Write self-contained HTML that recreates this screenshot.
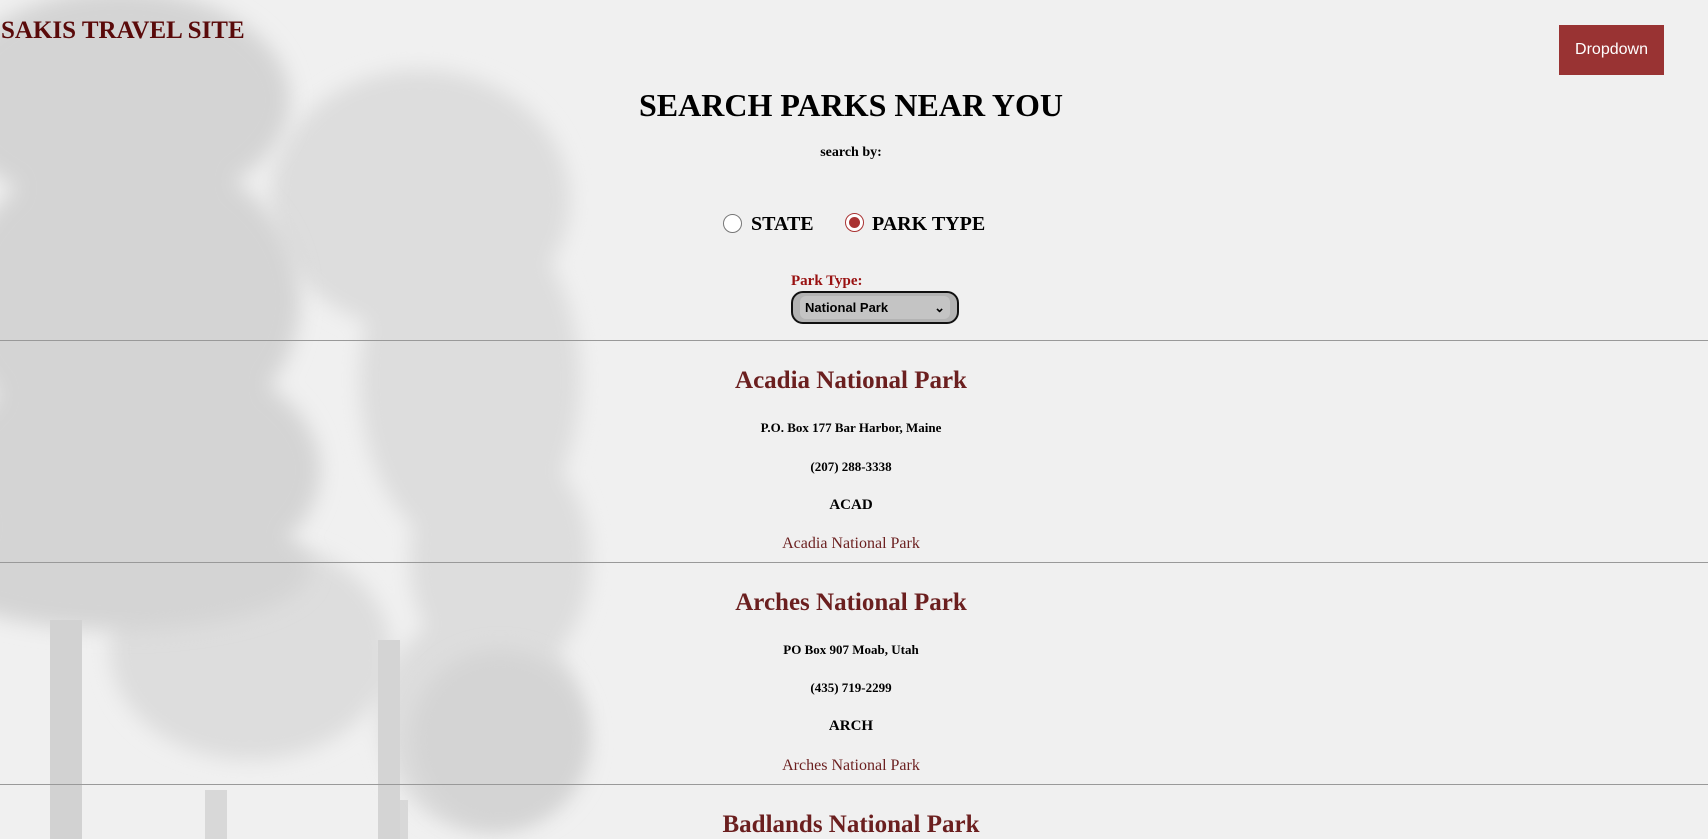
<!DOCTYPE html>
<html><head><style>
html,body{margin:0;padding:0;width:1708px;height:839px;overflow:hidden;background:#f0f0f0;font-family:"Liberation Serif",serif;}
.bg{position:absolute;left:0;top:0;width:1708px;height:839px;}
.t{position:absolute;left:-3px;width:1708px;text-align:center;white-space:nowrap;}
hr{position:absolute;left:0;width:1708px;margin:0;border:0;border-top:1px solid #999;}
.name{font-size:25px;font-weight:bold;color:#6b1f1f;}
.addr{font-size:13px;font-weight:bold;}
.code{font-size:15px;font-weight:bold;}
.link{font-size:16px;color:#6b1f1f;}
</style></head><body>
<svg class="bg" width="1708" height="839">
<defs><filter id="f" x="-20%" y="-20%" width="140%" height="140%"><feGaussianBlur stdDeviation="10"/></filter></defs>
<g fill="#dddddd" filter="url(#f)">
<ellipse cx="420" cy="200" rx="150" ry="130"/>
<ellipse cx="470" cy="380" rx="110" ry="170"/>
<ellipse cx="500" cy="560" rx="90" ry="120"/>
<ellipse cx="250" cy="650" rx="140" ry="110"/>
<ellipse cx="480" cy="720" rx="100" ry="110"/>
</g>
<rect x="380" y="800" width="28" height="39" fill="#d8d8d8"/>
<rect x="205" y="790" width="22" height="49" fill="#d8d8d8"/>
<g fill="#d4d4d4" filter="url(#f)">
<ellipse cx="120" cy="100" rx="170" ry="110"/>
<ellipse cx="130" cy="300" rx="170" ry="150"/>
<ellipse cx="140" cy="470" rx="180" ry="120"/>
<ellipse cx="120" cy="570" rx="190" ry="60"/>
<ellipse cx="500" cy="740" rx="90" ry="90"/>
</g>
<rect x="50" y="620" width="32" height="219" fill="#d2d2d2"/>
<rect x="378" y="640" width="22" height="199" fill="#d4d4d4"/>
</svg>

<div style="position:absolute;left:1px;top:17px;font-size:25px;font-weight:bold;color:#5a0a0a;">SAKIS TRAVEL SITE</div>
<div style="position:absolute;left:1559px;top:25px;width:105px;height:50px;background:#993333;color:#fff;font-family:'Liberation Sans',sans-serif;font-size:16px;line-height:50px;text-align:center;">Dropdown</div>

<div class="t" style="top:87px;font-size:32px;font-weight:bold;">SEARCH PARKS NEAR YOU</div>
<div class="t" style="top:145px;font-size:14px;font-weight:bold;">search by:</div>

<div style="position:absolute;left:723px;top:214px;width:19px;height:19px;border-radius:50%;border:1px solid #777;background:#fff;box-sizing:border-box;"></div>
<div style="position:absolute;left:751px;top:213px;font-size:20px;font-weight:bold;">STATE</div>
<div style="position:absolute;left:845px;top:213px;width:19px;height:19px;border-radius:50%;border:1px solid #a33;background:#fff;box-sizing:border-box;"><div style="position:absolute;left:3px;top:3px;width:11px;height:11px;border-radius:50%;background:#a33;"></div></div>
<div style="position:absolute;left:872px;top:213px;font-size:20px;font-weight:bold;">PARK TYPE</div>

<div style="position:absolute;left:791px;top:273px;font-size:15px;font-weight:bold;color:#991111;">Park Type:</div>
<div style="position:absolute;left:791px;top:291px;width:168px;height:33px;box-sizing:border-box;border:2px solid #111;border-radius:12px;background:#b3b3b3;">
<div style="position:absolute;left:7px;top:3px;width:150px;height:23px;background:#c4c4c4;border-radius:6px;font-family:'Liberation Sans',sans-serif;font-size:13px;font-weight:bold;line-height:23px;padding-left:5px;box-sizing:border-box;">National Park<span style="position:absolute;right:5px;">&#x2304;</span></div>
</div>

<hr style="top:340px">
<div class="t name" style="top:367px">Acadia National Park</div>
<div class="t addr" style="top:420px">P.O. Box 177 Bar Harbor, Maine</div>
<div class="t addr" style="top:459px">(207) 288-3338</div>
<div class="t code" style="top:497px">ACAD</div>
<div class="t link" style="top:535px">Acadia National Park</div>

<hr style="top:562px">
<div class="t name" style="top:589px">Arches National Park</div>
<div class="t addr" style="top:642px">PO Box 907 Moab, Utah</div>
<div class="t addr" style="top:680px">(435) 719-2299</div>
<div class="t code" style="top:718px">ARCH</div>
<div class="t link" style="top:757px">Arches National Park</div>

<hr style="top:784px">
<div class="t name" style="top:811px">Badlands National Park</div>
</body></html>
